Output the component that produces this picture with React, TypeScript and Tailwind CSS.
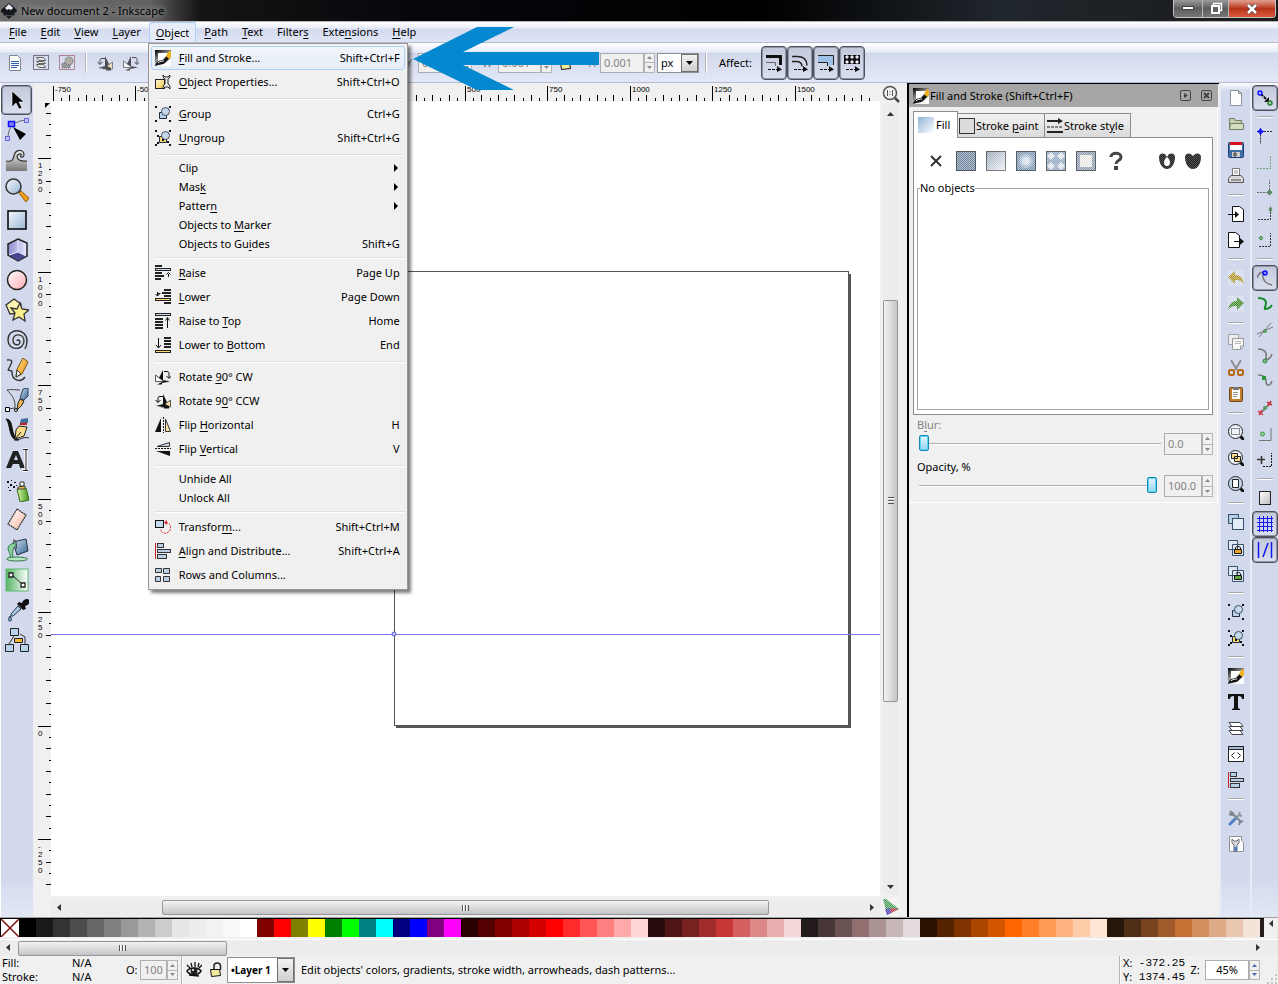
import React from "react";

type Draw = React.ReactNode;

/* ---------- shared helpers ---------- */

function Svg({ size = 16, children, className = "" }: { size?: number; children: Draw; className?: string }) {
  return (
    <svg width={size} height={size} viewBox={`0 0 ${size} ${size}`} fill="none" aria-hidden="true" className={`shrink-0 ${className}`}>
      {children}
    </svg>
  );
}

function Mnemonic({ text }: { text: string }) {
  const at = text.indexOf("_");
  if (at < 0) return <>{text}</>;
  return (
    <>
      {text.slice(0, at)}
      <span className="underline underline-offset-2">{text[at + 1]}</span>
      {text.slice(at + 2)}
    </>
  );
}

function Gradients() {
  const g = (id: string, a: string, b: string, x2 = 1, y2 = 1) => (
    <linearGradient id={id} x1="0" y1="0" x2={x2} y2={y2}>
      <stop offset="0" stopColor={a} />
      <stop offset="1" stopColor={b} />
    </linearGradient>
  );
  return (
    <svg width="0" height="0" className="absolute" aria-hidden="true">
      <defs>
        {g("blue", "#f4f9fd", "#9bb6d4")}
        {g("pink", "#ffffff", "#ffa9b3")}
        {g("wave", "#f2f2f2", "#777777", 0, 1)}
        {g("green", "#55b364", "#ffffff", 1, 0)}
        {g("yellow", "#fffbe0", "#f0c23c")}
        {g("orange", "#ffe08a", "#e8890c")}
        {g("eraser", "#ffffff", "#f5b79f")}
        {g("can", "#d8f5b0", "#3d9a12", 1, 0)}
        {g("bucket", "#cfe3f2", "#34658f")}
        {g("cube", "#8d8ccf", "#e8e8ff", 1, 0)}
        {g("fade", "#000000", "#ffffff", 0.6, 0.9)}
        {g("grey", "#ffffff", "#bdbdbd")}
        {g("tab", "#8fb2d6", "#ffffff")}
        {g("linear", "#8b9db0", "#f4f6f8")}
        <pattern id="mesh" width="2" height="2" patternUnits="userSpaceOnUse">
          <rect width="1" height="1" fill="#fff" fillOpacity=".45" />
          <rect x="1" y="1" width="1" height="1" fill="#fff" fillOpacity=".45" />
        </pattern>
      </defs>
    </svg>
  );
}

/* ---------- 16px drawings ---------- */

const objectPair = (fill: string) => (
  <>
    <path d="M4.5 6.500h7v6h-7z" fill={fill} stroke="#1d2b3a" />
    <circle cx="10.500" cy="5.500" r="4" fill="#c6d9ec" stroke="#3c4d60" />
    <path d="M0 0h2v2H0zM14 0h2v2h-2zM0 14h2v2H0zM14 14h2v2h-2z" fill="#111" />
  </>
);

const pic: Record<string, Draw> = {
  fill: (
    <>
      <path d="M0 0h16v16H0z" fill="url(#fade)" />
      <path d="M3 3h11L3 14z" fill="#fff" />
      <path d="M0 16c1-4 4-6 8-6l4-4 3 2-5 5c-2 2-6 1-10 3z" fill="#111" />
      <path d="M11 6l3-5 2 1v5l-2 2z" fill="#f3b21b" />
      <path d="M3 13c2-2 4-2 6-2" stroke="#fff" />
    </>
  ),
  props: (
    <>
      <rect x=".5" y="5.500" width="9" height="9" fill="url(#yellow)" stroke="#222" />
      <path d="M8 1c0 3 1 4 2 4v5c-2 1-2 3-2 5l2-2h3l2 2c0-3 0-4-2-5V5c2-1 2-3 2-4l-2 2h-3z" fill="#e8e8e8" stroke="#222" />
    </>
  ),
  group: objectPair("#b9d0e8"),
  ungroup: (
    <>
      {objectPair("#f8d568")}
      <path d="M7 9h2v2H7zM2 5h2v2H2zM12 11h2v2h-2zM2 12h2v2H2z" fill="#111" />
    </>
  ),
  raise: (
    <>
      <path d="M0 1h7M0 8h7M0 11h9M0 14h6" stroke="#222" strokeWidth="2" />
      <rect x=".5" y="3.500" width="15" height="2" fill="#c6d9ec" stroke="#222" />
      <path d="M13.500 12V9M11.500 9.500l2-2 2 2" stroke="#111" />
    </>
  ),
  lower: (
    <>
      <path d="M9 1h7M7 4h9M9 7h7M9 14h7" stroke="#222" strokeWidth="2" />
      <rect x=".5" y="9.500" width="15" height="2" fill="#ffdb6b" stroke="#222" />
      <path d="M2.500 3v4M.5 5l2 2 2-2M2.500 4.500h3" stroke="#111" />
    </>
  ),
  top: (
    <>
      <rect x=".5" y=".5" width="15" height="2" fill="#c6d9ec" stroke="#222" />
      <path d="M0 6h8M0 9h8M0 12h8M0 15h8" stroke="#222" strokeWidth="2" />
      <path d="M12.500 15V5M10.500 7.500l2-3 2 3" stroke="#111" />
    </>
  ),
  bottom: (
    <>
      <rect x=".5" y="13.500" width="15" height="2" fill="#ffdb6b" stroke="#222" />
      <path d="M9 1h7M9 4h7M9 7h7M9 10h7" stroke="#222" strokeWidth="2" />
      <path d="M3.500 1v10M1 8l2.500 3L6 8" stroke="#111" />
    </>
  ),
  cw: (
    <>
      <path d="M.5 6v6.500H9z" fill="#fff" stroke="#555" />
      <path d="M2 15.500h5v-1.500l8-1.500L8 11V1l-4 8 5 3" fill="#111" />
      <path d="M9 2.500h3c1.500 0 2 1 2 2V9M11.500 7L14 9.500 16.500 7" stroke="#111" />
    </>
  ),
  ccw: (
    <>
      <path d="M15.500 7v7H6z" fill="#f5dda0" stroke="#555" />
      <path d="M1 13l8 1v1.500h5V13l-4-2 2-2-4-8v10z" fill="#111" />
      <path d="M8 3.500H5C3.500 3.500 3 4 3 5.500v4M.5 7L3 9.500 5.500 7" stroke="#111" />
    </>
  ),
  fliph: (
    <>
      <path d="M6 1v14H0z" fill="#111" />
      <path d="M10.500 2v12.500h5z" fill="#f9e0a3" stroke="#333" />
      <path d="M8.500 0v16" stroke="#111" strokeDasharray="2 1" />
    </>
  ),
  flipv: (
    <>
      <path d="M14.500 1.500v4H2z" fill="#c6d9ec" stroke="#333" />
      <path d="M15 15v-5H1z" fill="#111" />
      <path d="M0 7.500h16" stroke="#111" strokeDasharray="2 1" />
    </>
  ),
  transform: (
    <>
      <rect x=".5" y="1.500" width="8" height="7" fill="#c6d9ec" stroke="#111" />
      <path d="M11 3.500c5 1 6 6 3 9s-8 2-8-2" stroke="#e0222b" strokeDasharray="2 1" />
      <path d="M12 1v5L9 3.500z" fill="#e0222b" />
    </>
  ),
  align: (
    <>
      <path d="M.5 0v16" stroke="#c81e28" />
      <rect x="2.500" y=".5" width="6" height="4" fill="#b9cfe6" stroke="#333" />
      <rect x="2.500" y="6.500" width="13" height="3" fill="#b9cfe6" stroke="#333" />
      <rect x="2.500" y="11.500" width="9" height="4" fill="#b9cfe6" stroke="#333" />
    </>
  ),
  rows: (
    <>
      <path d="M.5 1.500h6v4h-6zM8.500 1.500h6v5h-6zM.5 9.500h5v5h-5zM8.500 9.500h6v5h-6z" fill="#b9cfe6" stroke="#333" />
    </>
  ),
  doc: (
    <>
      <path d="M2.500.5h8l3 3v12h-11z" fill="#fff" stroke="#7d8594" />
      <path d="M4 6.500h8M4 8.500h8M4 10.500h8M4 12.500h6" stroke="#2f5ea8" />
    </>
  ),
  selectlayers: (
    <>
      <rect x=".5" y=".5" width="15" height="14" stroke="#111" strokeDasharray="1 1" />
      <path d="M3.500 2.500h7l2 3H6zM3.500 6.500h7l2 2H6zM3.500 9.500h7l2 3H6z" fill="#e6e6e6" stroke="#666" />
    </>
  ),
  deselect: (
    <>
      <rect x=".5" y=".5" width="15" height="14" stroke="#8d2b35" strokeDasharray="1 1" />
      <path d="M3 8h8v5H3z" fill="#999" stroke="#666" strokeDasharray="1 1" />
      <circle cx="10" cy="6" r="4" fill="#b0aca4" stroke="#555" strokeDasharray="1 1" />
    </>
  ),
  newdoc: <path d="M2.500.5h8l3 3v12h-11zM10.500.5v3h3" fill="#fdfdfb" stroke="#8e9093" />,
  open: (
    <>
      <path d="M1.500 13.500v-11h5l1 2h6v3" fill="#c5cfa9" stroke="#74806a" />
      <path d="M1.500 13.500l1-6h13v6z" fill="#d5dcbf" stroke="#74806a" />
    </>
  ),
  save: (
    <>
      <rect x=".5" y=".5" width="15" height="15" rx="1" fill="#3f6ea8" stroke="#1f3f6c" />
      <path d="M2 1h12v7H2z" fill="#fff" />
      <path d="M2 0h12v3H2z" fill="#d4121c" />
      <path d="M4 10h8v5H4z" fill="#cfcfcf" />
      <path d="M6 11h2v3H6z" stroke="#333" />
    </>
  ),
  print: (
    <>
      <path d="M4.500 7V.5h7V7" fill="#fff" stroke="#777" />
      <path d="M6 3h4M6 5h4" stroke="#999" />
      <path d="M3 7.500h10l2.500 3v4H.5v-4z" fill="#d8d8d8" stroke="#555" />
      <path d="M3 12h10" stroke="#555" />
    </>
  ),
  importdoc: (
    <>
      <path d="M4.500.5h7l4 3v12h-11z" fill="#fff" stroke="#111" />
      <path d="M0 8.500h8" stroke="#111" />
      <path d="M7 5l4 3.500L7 12z" fill="#111" />
    </>
  ),
  exportdoc: (
    <>
      <path d="M.5.5h7l4 3v12H.5z" fill="#fff" stroke="#111" />
      <path d="M6 9.500h8" stroke="#111" />
      <path d="M12 6l4 3.500-4 3.500z" fill="#111" />
    </>
  ),
  undo: (
    <>
      <path d="M0 7l7-6v4c6 0 8 4 9 9-3-4-5-4-9-4v4z" fill="#ad9224" />
      <path d="M0 0h16v16H0z" fill="url(#mesh)" />
    </>
  ),
  redo: (
    <>
      <path d="M16 7L9 1v4C3 5 1 9 0 14c3-4 5-4 9-4v4z" fill="#3c8a28" />
      <path d="M0 0h16v16H0z" fill="url(#mesh)" />
    </>
  ),
  copy: (
    <>
      <path d="M.5.5h10v10H.5z" fill="#eceef2" stroke="#a0a2a8" />
      <path d="M4.500 4.500h11v8l-3 3h-8zM12.500 15v-3h3" fill="#f7f7f7" stroke="#9a9a9a" />
      <path d="M7 7.500h6M7 9.500h6" stroke="#bbb" />
    </>
  ),
  cut: (
    <>
      <path d="M3 0l6 10M13 0L7 10" stroke="#8d8f92" strokeWidth="2" />
      <rect x="1" y="10" width="5" height="5" rx="1.500" stroke="#b4690f" strokeWidth="2" />
      <rect x="10" y="10" width="5" height="5" rx="1.500" stroke="#b4690f" strokeWidth="2" />
    </>
  ),
  paste: (
    <>
      <rect x="1.500" y="1.500" width="13" height="14" rx="1" fill="#c07f2e" stroke="#6d4412" />
      <path d="M4 3h8v10H4z" fill="#fff" />
      <path d="M5 1h6v3H5z" fill="#777" />
      <path d="M5 6.500h5M5 8.500h5M5 10.500h4" stroke="#999" />
    </>
  ),
  clone: (
    <>
      <rect x=".5" y=".5" width="10" height="9" fill="#b9cfe6" stroke="#38516c" />
      <rect x="4.500" y="4.500" width="11" height="11" fill="#e3edf7" stroke="#38516c" />
    </>
  ),
  clonelock: (
    <>
      <path d="M.5.500h9v9h-9zM4.500 4.500h11v11h-11z" fill="#dfe9f3" stroke="#38516c" />
      <path d="M7.500 9.500V8C7.500 6 12.500 6 12.500 8v1.500" stroke="#111" />
      <path d="M6.500 9.500h7v4h-7z" fill="#f0a31c" stroke="#111" />
    </>
  ),
  cloneopen: (
    <>
      <path d="M.5.5h9v9h-9zM4.500 4.500h11v11h-11z" fill="#dfe9f3" stroke="#38516c" />
      <path d="M8 8c0-2 4.500-2 4.500 0v1.500" stroke="#111" />
      <path d="M6.500 9.500h7v4h-7z" fill="#5da53c" stroke="#111" />
    </>
  ),
  text: <path d="M0 0h16v5h-2c0-2-1-3-4-3v11c0 1 1 2 2 2v1H4v-1c1 0 2-1 2-2V2C3 2 2 3 2 5H0z" fill="#111" />,
  layers: <path d="M1 10.500h11l3 4H4zM1 6.500h11l3 4H4zM1 2.500h11l3 4H4z" fill="#fff" stroke="#444" />,
  xml: (
    <>
      <rect x=".5" y=".5" width="15" height="15" fill="#fff" stroke="#222" />
      <path d="M1 2h14" stroke="#9fb9d6" strokeWidth="2" />
      <path d="M1 3.500h14" stroke="#222" />
      <path d="M6.500 6.500l-3 3 3 3M9.500 6.500l3 3-3 3" stroke="#222" />
    </>
  ),
  prefs: (
    <>
      <path d="M2 1l11 11M1 4l3 1 1-3M11 15l1-3 3-1" stroke="#7f848c" strokeWidth="2" />
      <path d="M12 2l-1 3 3 1M11 5L7 9" stroke="#8f959e" strokeWidth="2" />
      <path d="M7 9l-5 5" stroke="#4f7fc0" strokeWidth="3" strokeLinecap="round" />
    </>
  ),
  docprops: (
    <>
      <path d="M1.500.5h12v4l2 2v9h-14z" fill="#fff" stroke="#8e9093" />
      <path d="M4 3v4l2 2v6h3V9l2-2V3L9 5H6z" fill="#d5d9de" stroke="#667" />
      <path d="M6 11h3v4H6z" fill="#4f7fc0" />
    </>
  ),
  zoomsel: (
    <>
      <path d="M12 12l4 4" stroke="#111" strokeWidth="3" />
      <circle cx="7.500" cy="7.500" r="7" fill="#edf3f9" stroke="#222" />
      <rect x="3.500" y="4.500" width="8" height="6" stroke="#222" strokeDasharray="1 1" />
    </>
  ),
  zoomdraw: (
    <>
      <path d="M12 12l4 4" stroke="#111" strokeWidth="3" />
      <circle cx="7.500" cy="7.500" r="7" fill="#edf3f9" stroke="#222" />
      <path d="M3.500 3.500h6v5h-6zM6.500 6.500h6v5h-6z" fill="#ffdb8b" stroke="#222" />
    </>
  ),
  zoompage: (
    <>
      <path d="M12 12l4 4" stroke="#111" strokeWidth="3" />
      <circle cx="7.500" cy="7.500" r="7" fill="#c5d6e8" stroke="#222" />
      <path d="M4.500 3.500h6v8h-6z" fill="#fff" stroke="#222" />
    </>
  ),
  snap: (
    <>
      <path d="M4 4l7 7" stroke="#111" strokeWidth="2" strokeDasharray="3 1" />
      <path d="M12 7v5H7z" fill="#111" />
      <circle cx="3" cy="3" r="2" fill="#b5b5ff" stroke="#1111ff" strokeWidth="1.500" />
      <circle cx="13" cy="13" r="2" fill="#9ccf9f" stroke="#2d8038" strokeWidth="1.500" />
    </>
  ),
  snapbox: (
    <>
      <path d="M3.500 3.500V16M4 3.500h12" stroke="#333" strokeDasharray="2 1" />
      <circle cx="3.500" cy="3.500" r="2" fill="#5a5aff" stroke="#1111ff" />
      <path d="M0 3.500h7M3.500 0v7" stroke="#1111ff" />
    </>
  ),
  snapedge: <path d="M0 14.500h13.500V1" stroke="#7aa37c" strokeDasharray="2 1" />,
  snapcorner: (
    <>
      <path d="M0 12.500h12.500V0" stroke="#666" strokeDasharray="2 1" />
      <path d="M12.500 9l3 3.500-3 3-3-3z" fill="#5c8b60" />
    </>
  ),
  snapmid: (
    <>
      <path d="M1 13.500h12.500V3" stroke="#333" strokeDasharray="2 1" />
      <path d="M13.500 0l2 3.500-2 3-2-3z" fill="#5c8b60" />
    </>
  ),
  snapcenter: (
    <>
      <path d="M2 14.500h11.500V1" stroke="#333" strokeDasharray="2 1" />
      <circle cx="4" cy="6" r="1.500" fill="#9ccf9f" stroke="#2d8038" />
    </>
  ),
  snapnode: (
    <>
      <path d="M0 8C2 2 5 2 8 2M6 4c-1 6 3 10 9 11" stroke="#777" strokeWidth="1.500" />
      <circle cx="8" cy="3" r="2" fill="#8a8aff" stroke="#1111ff" strokeWidth="1.500" />
    </>
  ),
  snappath: <path d="M1 2c4 0 8 1 8 5 0 3-2 5-1 6 2 0 5-1 7-4" stroke="#128a26" strokeWidth="2" />,
  snapcross: (
    <>
      <path d="M0 12L16 5M2 15L14 1" stroke="#777" />
      <circle cx="8" cy="9" r="2" fill="#5c9b60" />
    </>
  ),
  snapcusp: (
    <>
      <path d="M1 1c6 0 9 3 8 8-1 4 4 3 6-3" stroke="#777" strokeWidth="1.500" />
      <circle cx="8" cy="13" r="2" fill="#7fc183" stroke="#2d8038" />
    </>
  ),
  snapsmooth: (
    <>
      <path d="M1 1c4 0 8 1 8 6 0 5 4 6 6 0" stroke="#777" strokeWidth="1.500" />
      <path d="M5 2h4v4H5z" fill="#2d9a3a" />
    </>
  ),
  snapline: (
    <>
      <path d="M3 14L14 2" stroke="#8b8b8b" strokeWidth="2" />
      <path d="M1 11l5 4M2 15l3-5M10 2l5 3M11 6l3-5" stroke="#cf3340" strokeWidth="1.500" />
      <circle cx="8" cy="8" r="2" fill="#4c9e55" />
    </>
  ),
  snapobj: (
    <>
      <path d="M2 14.500h12V2" stroke="#777" />
      <circle cx="5.500" cy="8" r="2" fill="#9ccf9f" stroke="#2d9a3a" />
    </>
  ),
  snaprot: (
    <>
      <path d="M6 14.500h8.500V1" stroke="#111" strokeDasharray="2 1" />
      <path d="M0 7.500h8M4.500 4v8" stroke="#333" strokeWidth="1.500" />
    </>
  ),
  snappage: <rect x="2.500" y="1.500" width="11" height="13" fill="url(#grey)" stroke="#222" />,
  grid: <path d="M2.500 0v16M6.500 0v16M10.500 0v16M14.500 0v16M0 2.500h16M0 6.500h16M0 10.500h16M0 14.500h16" stroke="#1616f0" />,
  guides: <path d="M1.500 0v16M14.500 0v16M11 1L6 15" stroke="#1616f0" strokeWidth="1.500" />,
  aff1: (
    <>
      <path d="M0 2.500h14.500V11" stroke="#111" strokeWidth="3" />
      <path d="M0 8.500h9.500V12" stroke="#666" />
      <path d="M2 15.500h9" stroke="#111" strokeDasharray="3 1" />
      <path d="M11 12l5 3.500-5 2.500z" fill="#111" />
    </>
  ),
  aff2: (
    <>
      <path d="M0 2.500h5c6 0 10 3 10 9M0 7.500h4c4 0 6 1 6 5" stroke="#222" strokeWidth="1.500" />
      <path d="M2 15.500h9" stroke="#111" strokeDasharray="3 1" />
      <path d="M11 12l5 3.500-5 2.500z" fill="#111" />
    </>
  ),
  aff3: (
    <>
      <path d="M0 2h15v9h-5V8H0z" fill="#9fc0e6" />
      <path d="M0 1.500h15.500V11M0 8.500h9.500V12" stroke="#222" />
      <path d="M2 15.500h9" stroke="#111" strokeDasharray="3 1" />
      <path d="M11 12l5 3.500-5 2.500z" fill="#111" />
    </>
  ),
  aff4: (
    <>
      <path d="M0 1h16v9H0z" fill="#111" />
      <path d="M3 1l2 2-2 2-2-2zM8 1l2 2-2 2-2-2zM13 1l2 2-2 2-2-2zM3 6l2 2-2 2-2-2zM8 6l2 2-2 2-2-2zM13 6l2 2-2 2-2-2z" fill="#e9ecf6" />
      <path d="M2 15.500h9" stroke="#111" strokeDasharray="3 1" />
      <path d="M11 12l5 3.500-5 2.500z" fill="#111" />
    </>
  ),
  lock: (
    <>
      <path d="M6 7V4c0-4 6.500-4 6.500 0v4" stroke="#222" strokeWidth="1.500" />
      <path d="M2.500 7.500h9l1 6-9 1z" fill="#f3ea9c" stroke="#111" />
    </>
  ),
  eye: (
    <>
      <path d="M1 9c3-4 11-4 14 0-3 5-11 5-14 0z" fill="#fff" stroke="#111" strokeWidth="1.500" />
      <circle cx="8" cy="9" r="3.500" fill="#222" />
      <circle cx="7" cy="8" r="1" fill="#fff" />
      <path d="M1 3l3 3M5 1l1 4M9 0v5M13 1l-1 4M16 3l-3 3M3 13l10 1" stroke="#111" strokeWidth="1.300" />
    </>
  ),
};

/* ---------- 24px tool drawings ---------- */

const tools: { name: string; art: Draw }[] = [
  { name: "Select", art: <path d="M7 3v16l4-4 3 6 3-1-3-6h5z" fill="#000" stroke="#fff" strokeWidth=".6" /> },
  {
    name: "Edit nodes",
    art: (
      <>
        <path d="M3 20C3 8 10 3 21 2" stroke="#667" />
        <path d="M.5 18.500h4v4h-4zM19.500.5h4v4h-4z" fill="#c4c4f7" stroke="#5f5fe8" />
        <path d="M3.500 3.500h6v5h-6z" fill="#7d7dff" stroke="#1111ff" strokeWidth="1.500" />
        <path d="M8 9l13 7-6 6z" fill="#000" />
      </>
    ),
  },
  {
    name: "Tweak",
    art: (
      <>
        <path d="M1 23V13c6 1 7-1 8-5 1-5 6-8 9-5 2 3 0 6-2 4-5-1-6 8 6 6v10z" fill="url(#wave)" />
        <path d="M1 13c6 1 7-1 8-5 1-6 7-7 9-4 2 2 1 6-2 5-1-1 0-3 1-2M16 6c-6-1-6 8 6 7" stroke="#333" strokeWidth="1.200" />
      </>
    ),
  },
  {
    name: "Zoom",
    art: (
      <>
        <path d="M14 15l2-2 8 7-3 4z" fill="#f0a020" stroke="#8b5a08" />
        <circle cx="8.500" cy="8.500" r="7.500" fill="url(#blue)" stroke="#333" strokeWidth="1.500" />
      </>
    ),
  },
  { name: "Rectangle", art: <rect x="3" y="3" width="18" height="18" fill="url(#blue)" stroke="#000" strokeWidth="1.500" /> },
  {
    name: "3D box",
    art: (
      <>
        <path d="M13 1l9 4v13l-9 5-10-6V6z" fill="url(#cube)" stroke="#222" strokeWidth="1.500" />
        <path d="M13 14l8 4-8 5-9-6z" fill="#47478f" />
        <path d="M13 2v12l-9 3M13 14l8 4" stroke="#e9e9ff" />
      </>
    ),
  },
  { name: "Ellipse", art: <circle cx="12" cy="12" r="9.500" fill="url(#pink)" stroke="#222" strokeWidth="1.500" /> },
  {
    name: "Star",
    art: (
      <>
        <path d="M9 1l7 5-2 9-9 1-4-9z" fill="#fcf3b0" stroke="#333" strokeWidth="1.300" />
        <path d="M15 5l2 6 7 1-5 4 1 7-6-4-6 3 2-7-4-5 6 1z" fill="#fdee8c" stroke="#333" strokeWidth="1.300" />
      </>
    ),
  },
  {
    name: "Spiral",
    art: <path d="M12 13c0-2 3-1 3 1 0 4-7 4-7-2 0-7 11-7 11 1 0 10-16 10-16-1C3-1 22 0 22 13c0 4-1 6-2 8" stroke="#333" strokeWidth="1.400" />,
  },
  {
    name: "Pencil",
    art: (
      <>
        <path d="M2 2c8-1 4 4 2 8-3 5 4 0 3 5 0 6 8 11 13 4" stroke="#333" strokeWidth="1.400" />
        <path d="M18 0l5 4-6 12-6 3 1-8z" fill="url(#orange)" stroke="#7b5208" />
        <path d="M12 12l4 4-5 3z" fill="#fff" stroke="#333" />
      </>
    ),
  },
  {
    name: "Bezier",
    art: (
      <>
        <path d="M2 2c5-1 9 0 13 0M2 2c4 4 9 10 8 18L3 21" stroke="#444" />
        <path d="M.5 19.500h4v4h-4z" fill="#fff" stroke="#000" />
        <circle cx="11" cy="22" r="1.500" fill="#fff" stroke="#000" />
        <path d="M18 1l5-1v8l-4 4-4-2z" fill="url(#bucket)" stroke="#345" />
        <path d="M15 11l4 2-2 4-5 5 1-7z" fill="#e8b34e" stroke="#222" />
      </>
    ),
  },
  {
    name: "Calligraphy",
    art: (
      <>
        <path d="M1 1c9 0 3 17 13 21-11 1-8-16-13-21z" fill="#111" stroke="#111" />
        <path d="M9 22c5 1 9-4 15-2" stroke="#222" />
        <path d="M16 1l7-1v5h-8z" fill="#456f98" />
        <path d="M15 5h7v2h-7z" fill="#c42020" />
        <path d="M14 8l8 1-3 9-9 3 1-9z" fill="#f7dc8c" stroke="#222" />
        <path d="M11 20l5-6" stroke="#222" />
      </>
    ),
  },
  {
    name: "Text",
    art: (
      <>
        <path d="M1 20L8 3h5l7 17h-5l-1-4H8l-2 4zM9 12h4l-2-5z" fill="#222" fillRule="evenodd" />
        <path d="M18 1.500h5M18 22.500h5M21 2v20" stroke="#fff" strokeWidth="3" />
        <path d="M18 1.500h5M18 22.500h5M21 2v20" stroke="#222" />
      </>
    ),
  },
  {
    name: "Spray",
    art: (
      <>
        <path d="M12 11l9-1 3 12-9 2z" fill="url(#can)" stroke="#3a6a18" />
        <path d="M13 9l7-1v3h-7z" fill="#f0b848" stroke="#444" />
        <path d="M15 4h4v4h-4z" fill="#fff" stroke="#333" />
        <path d="M2 3h2v2H2zM6 2h1v1H6zM5 6h2v2H5zM9 4h2v1H9zM3 9h1v1H3zM8 8h2v2H8zM4 12h2v1H4zM11 7h1v1h-1z" fill="#111" />
      </>
    ),
  },
  { name: "Eraser", art: <path d="M12 1l9 6-9 15-9-6z" fill="url(#eraser)" stroke="#333" strokeDasharray="2 .6" strokeWidth="1.200" /> },
  {
    name: "Paint bucket",
    art: (
      <>
        <path d="M8 4l13-3 2 12-11 4z" fill="url(#bucket)" stroke="#234" />
        <path d="M3 11c0-5 6-7 9-4-4 1-5 6-4 13H5c1-4-1-5-2-9z" fill="#8ed2a0" stroke="#357a48" />
        <ellipse cx="12" cy="21" rx="10.500" ry="2" fill="#b7e6c2" stroke="#357a48" />
        <path d="M8 2c3-1 4 4 3 9" stroke="#333" />
      </>
    ),
  },
  {
    name: "Gradient",
    art: (
      <>
        <rect x="1" y="1" width="22" height="22" fill="url(#green)" stroke="#63b873" />
        <path d="M7 7l10 9" stroke="#222" />
        <path d="M4 5h4v4H4zM16 15h4v4h-4z" fill="#fff" stroke="#222" strokeWidth="1.300" />
      </>
    ),
  },
  {
    name: "Dropper",
    art: (
      <>
        <path d="M14 4l3 1c1-4 6-5 7-3s0 5-4 6l1 3-3 1-6-6z" fill="#111" />
        <path d="M13 8l3 3-8 7H6v-2z" fill="#a9c8e6" stroke="#26384a" />
        <path d="M5 18c2 3 2 5 0 5s-2-2 0-5z" fill="#7aa6d4" stroke="#26384a" />
      </>
    ),
  },
  {
    name: "Connector",
    art: (
      <>
        <path d="M9 8l-5 8M15 6l5 3v8" stroke="#333" />
        <path d="M5.500.5h8v7h-8zM.5 16.500h8v7h-8zM15.500 16.500h8v7h-8z" fill="#b9d2ec" stroke="#222" />
        <path d="M9.500 10.500h8v4h-8z" fill="#f7bb34" stroke="#222" />
      </>
    ),
  },
];

/* ---------- title and menus ---------- */

function TitleBar() {
  return (
    <header className="flex h-[22px] items-start justify-between border-b border-[#b5b5b8] bg-[linear-gradient(90deg,#6f6f6f_0px,#606060_150px,#141414_200px,#05070b_420px,#000_760px,#20262d_1000px,#1b1b1b_100%)]">
      <div className="flex h-[22px] items-center gap-1 pl-px">
        <Svg size={16}>
          <path d="M8 0l7 6c2 2 0 4-2 4l1 2-3 1-3 3-3-3-3-1 1-2c-3 0-4-2-2-4z" fill="#15171c" />
          <path d="M8 1l4 4-2 2-2-1-2 1-2-2z" fill="#e8eef5" />
          <path d="M4 12c3 1 5 1 8 0" stroke="#556" />
        </Svg>
        <h1 className="text-black [text-shadow:0_0_6px_#aaa,0_0_10px_#999]">New document 2 - Inkscape</h1>
      </div>
      <div className="mr-0.5 flex h-[18px] overflow-hidden rounded-b border border-t-0 border-[#c3c3c3]">
        <button aria-label="Minimize" className="flex w-7 items-center justify-center bg-gradient-to-b from-[#9a9a9a] via-[#5d5d5d] to-[#777]">
          <svg width="12" height="5" viewBox="0 0 12 5" aria-hidden="true"><rect x=".5" y=".5" width="11" height="3" fill="#fff" stroke="#444" /></svg>
        </button>
        <button aria-label="Restore" className="flex w-[27px] items-center justify-center border-x border-[#b9b9b9] bg-gradient-to-b from-[#9a9a9a] via-[#5d5d5d] to-[#777]">
          <Svg size={14}>
            <path d="M4.500 3V1.500h8v7H11" stroke="#fff" strokeWidth="1.500" />
            <rect x="3" y="4" width="7" height="7" stroke="#fff" strokeWidth="2" />
          </Svg>
        </button>
        <button aria-label="Close" className="flex w-[46px] items-center justify-center bg-gradient-to-b from-[#e0a08f] via-[#b8321b] to-[#d85a3a]">
          <Svg size={12}><path d="M2 2l8 8M10 2l-8 8" stroke="#444" strokeWidth="4" /><path d="M2 2l8 8M10 2l-8 8" stroke="#fff" strokeWidth="2.500" /></Svg>
        </button>
      </div>
    </header>
  );
}

type Item = { label: string; keys?: string; icon?: string; sub?: boolean };

const objectMenu: Item[][] = [
  [
    { label: "_Fill and Stroke...", keys: "Shift+Ctrl+F", icon: "fill" },
    { label: "_Object Properties...", keys: "Shift+Ctrl+O", icon: "props" },
  ],
  [
    { label: "_Group", keys: "Ctrl+G", icon: "group" },
    { label: "_Ungroup", keys: "Shift+Ctrl+G", icon: "ungroup" },
  ],
  [
    { label: "Clip", sub: true },
    { label: "Mas_k", sub: true },
    { label: "Patter_n", sub: true },
    { label: "Objects to _Marker" },
    { label: "Objects to Gu_ides", keys: "Shift+G" },
  ],
  [
    { label: "_Raise", keys: "Page Up", icon: "raise" },
    { label: "_Lower", keys: "Page Down", icon: "lower" },
    { label: "Raise to _Top", keys: "Home", icon: "top" },
    { label: "Lower to _Bottom", keys: "End", icon: "bottom" },
  ],
  [
    { label: "Rotate _90° CW", icon: "cw" },
    { label: "Rotate 9_0° CCW", icon: "ccw" },
    { label: "Flip _Horizontal", keys: "H", icon: "fliph" },
    { label: "Flip _Vertical", keys: "V", icon: "flipv" },
  ],
  [{ label: "Unhide All" }, { label: "Unlock All" }],
  [
    { label: "Transfor_m...", keys: "Shift+Ctrl+M", icon: "transform" },
    { label: "_Align and Distribute...", keys: "Shift+Ctrl+A", icon: "align" },
    { label: "Rows and Columns...", icon: "rows" },
  ],
];

function ObjectMenu() {
  return (
    <div role="menu" aria-label="Object" className="absolute top-[21px] -left-px z-20 w-[260px] border border-[#979797] bg-[#f0f0f0] p-0.5 shadow-[3px_3px_3px_rgba(0,0,0,0.5)]">
      {objectMenu.map((section, s) => (
        <div key={s}>
          {s > 0 && (
            <div className="h-2 pt-1 pl-1">
              <div className="h-0.5 border-b border-white bg-[#e0e0e0]" />
            </div>
          )}
          {section.map((item, i) => (
            <button
              key={item.label}
              role="menuitem"
              className={`flex w-full items-center rounded-[3px] border pr-1 text-left ${item.icon ? "h-6" : "h-[19px]"} ${
                s === 0 && i === 0 ? "border-[#aecff7] bg-gradient-to-b from-[#f2f5fa] to-[#e6edf7]" : "border-transparent"
              }`}
            >
              <span className="flex w-[27px] pl-[3px]">{item.icon && <Svg>{pic[item.icon]}</Svg>}</span>
              <span className="grow"><Mnemonic text={item.label} /></span>
              {item.keys && <span>{item.keys}</span>}
              {item.sub && (
                <svg width="4" height="8" viewBox="0 0 4 8" className="mr-0.5" aria-hidden="true"><path d="M0 0l4 4-4 4z" fill="#000" /></svg>
              )}
            </button>
          ))}
        </div>
      ))}
    </div>
  );
}

function MenuBar() {
  const before = ["_File", "_Edit", "_View", "_Layer"];
  const after = ["_Path", "_Text", "Filter_s", "Exte_nsions", "_Help"];
  const plain = (t: string) => (
    <button key={t} className="px-[7px]"><Mnemonic text={t} /></button>
  );
  return (
    <nav className="flex h-[21px] border-b border-[#b6bccf] bg-[linear-gradient(#fff_0px,#e9edf8_6px,#d4dbef_7px,#dfe5f5_20px)] pl-0.5">
      {before.map(plain)}
      <div className="relative mx-px flex">
        <button aria-haspopup="menu" aria-expanded="true" className="rounded-t-[3px] border border-b-0 border-[#aecff7] bg-[#e6ecf8] px-1.5">
          <Mnemonic text="_Object" />
        </button>
        <ObjectMenu />
      </div>
      {after.map(plain)}
    </nav>
  );
}

/* ---------- form pieces ---------- */

function Steppers({ active = false }: { active?: boolean }) {
  const arrow = active ? "#4a62b8" : "#8a8a8a";
  return (
    <span className="flex w-[11px] flex-col bg-[#f0f0f0]">
      <button aria-label="Increase" className="flex grow items-center justify-center border border-[#b5b5b5]">
        <svg width="5" height="3" viewBox="0 0 5 3" aria-hidden="true"><path d="M0 3l2.500-3L5 3z" fill={arrow} /></svg>
      </button>
      <button aria-label="Decrease" className="flex grow items-center justify-center border border-t-0 border-[#b5b5b5]">
        <svg width="5" height="3" viewBox="0 0 5 3" aria-hidden="true"><path d="M0 0l2.500 3L5 0z" fill={arrow} /></svg>
      </button>
    </span>
  );
}

function Spin({ label, value, width, height = "h-5", active = false }: { label: string; value: string; width: string; height?: string; active?: boolean }) {
  return (
    <span className={`flex shrink-0 ${height}`}>
      <input
        aria-label={label}
        disabled={!active}
        defaultValue={value}
        className={`${width} border border-[#abadb3] px-[3px] ${active ? "bg-white text-center text-black" : "bg-[#f0f0f0] text-[#838383]"}`}
      />
      <Steppers active={active} />
    </span>
  );
}

function Combo({ label, value, className, arrowWidth }: { label: string; value: string; className: string; arrowWidth: string }) {
  return (
    <span className={`relative flex shrink-0 border border-[#8e8f8f] bg-white ${className}`}>
      <select aria-label={label} className="w-full appearance-none bg-transparent pl-[3px]">
        <option>{value}</option>
      </select>
      <span className={`pointer-events-none absolute inset-y-0 right-0 flex items-center justify-center border border-[#707070] bg-gradient-to-b from-[#f2f2f2] to-[#cfcfcf] ${arrowWidth}`}>
        <svg width="7" height="4" viewBox="0 0 7 4" aria-hidden="true"><path d="M0 0h7L3.500 4z" fill="#000" /></svg>
      </span>
    </span>
  );
}

function ToolButton({ name, children }: { name: string; children: Draw }) {
  return <button aria-label={name} className="flex w-[26px] items-center justify-center">{children}</button>;
}

const pressedLook = "rounded border border-[#4d515c] shadow-[inset_0_0_0_1px_#8f95a6] bg-gradient-to-b from-[#c3c9dc] to-[#dadfef]";

function ControlBar() {
  return (
    <div className="flex h-10 items-center border-b border-[#b7b7cf] bg-[linear-gradient(#fff_0px,#e8ecf7_9px,#d3d9ec_10px,#e2e8f7_39px)] pl-0.5">
      <ToolButton name="Select all"><Svg>{pic.doc}</Svg></ToolButton>
      <ToolButton name="Select in all layers"><Svg>{pic.selectlayers}</Svg></ToolButton>
      <ToolButton name="Deselect"><Svg>{pic.deselect}</Svg></ToolButton>
      <div className="mx-[5px] h-5 w-0.5 border-r border-white bg-[#b5b5b5]" />
      <ToolButton name="Rotate counter-clockwise"><Svg className="opacity-70">{pic.ccw}</Svg></ToolButton>
      <ToolButton name="Rotate clockwise"><Svg className="opacity-70">{pic.cw}</Svg></ToolButton>
      <div className="ml-[262px] flex items-center text-[#838383]">
        <span className="w-3">Y</span>
        <Spin label="Y" value="0.001" width="w-[43px]" />
        <span className="ml-2.5 w-4">W</span>
        <Spin label="Width" value="0.001" width="w-[43px]" />
      </div>
      <button aria-label="Lock width and height" className="ml-1.5 w-5"><Svg>{pic.lock}</Svg></button>
      <div className="ml-2.5 flex items-center text-[#838383]">
        <span className="w-3">H</span>
        <Spin label="Height" value="0.001" width="w-[44px]" />
      </div>
      <Combo label="Unit" value="px" className="ml-0.5 h-5 w-[42px]" arrowWidth="w-[17px]" />
      <div className="ml-1.5 h-5 w-0.5 border-r border-white bg-[#b5b5b5]" />
      <span className="ml-3 w-[42px]">Affect:</span>
      {["aff1", "aff2", "aff3", "aff4"].map((name, i) => (
        <button key={name} aria-pressed="true" aria-label={`Affect option ${i + 1}`} className={`flex h-[34px] w-[26px] items-center justify-center ${pressedLook}`}>
          <svg width="16" height="18" viewBox="0 0 16 18" fill="none" aria-hidden="true">{pic[name]}</svg>
        </button>
      ))}
    </div>
  );
}

/* ---------- left tools, rulers and canvas ---------- */

function Toolbox() {
  return (
    <div role="toolbar" aria-label="Tools" className="flex w-[33px] shrink-0 flex-col items-center border-l border-white bg-[linear-gradient(#e6ebf7_0px,#d3d9ec_8px,#d3d9ec_95%,#e2e7f6_100%)] pt-0.5 pr-px">
      {tools.map((t, i) => (
        <button key={t.name} aria-label={t.name} className={`flex h-[30px] w-[31px] items-center justify-center ${i === 0 ? pressedLook : ""}`}>
          <Svg size={24}>{t.art}</Svg>
        </button>
      ))}
    </div>
  );
}

function TopRuler() {
  const step = 8.24;
  const ticks = Array.from({ length: 100 }, (_, i) => i);
  const labels = [-750, -500, 500, 750, 1000, 1250, 1500];
  return (
    <svg className="h-[18px] w-full" aria-hidden="true">
      {ticks.map((i) => {
        const x = Math.round(2 + i * step) + 0.5;
        const len = i % 10 === 0 ? 15 : i % 2 === 0 ? 6 : 3;
        return <path key={i} d={`M${x} ${18 - len}v${len}`} stroke="#000" />;
      })}
      {labels.map((v) => (
        <text key={v} x={Math.round(2 + ((v + 750) / 25) * step) + 2} y="9" className="font-['Liberation_Sans',sans-serif] text-[8px]" fill="#000">
          {v}
        </text>
      ))}
    </svg>
  );
}

function SideRuler() {
  const step = 11.35;
  const ticks = Array.from({ length: 70 }, (_, i) => i - 4);
  return (
    <svg className="h-full w-[18px] shrink-0" aria-hidden="true">
      <path d="M12 20h5l-5 5z" fill="#000" />
      {ticks.map((i) => {
        const y = Math.round(75 + i * step) + 0.5;
        const len = i % 10 === 0 ? 13 : i % 2 === 0 ? 5 : 2;
        return y > 24 && y < 802 ? <path key={i} d={`M${18 - len} ${y}h${len}`} stroke="#000" /> : null;
      })}
      {ticks.filter((i) => i % 10 === 0).map((i) =>
        String(1250 - i * 25).split("").map((c, k) => (
          <text key={`${i}-${k}`} x="5" y={Math.round(75 + i * step) + 10 + k * 8} className="font-['Liberation_Sans',sans-serif] text-[8px]" fill="#000">
            {c}
          </text>
        )),
      )}
    </svg>
  );
}

function Canvas() {
  return (
    <svg className="w-full min-w-0 grow basis-0 bg-white" aria-label="Drawing">
      <path d="M345 625.500h453.500V173" stroke="#555" strokeWidth="3" fill="none" />
      <rect x="343.500" y="170.500" width="454" height="454" fill="#fff" stroke="#555" />
      <path d="M0 533.500h4000" stroke="#7878f5" />
      <circle cx="343" cy="533" r="2" fill="#c9c9ff" stroke="#5555dd" />
    </svg>
  );
}

function Grip({ vertical = false }: { vertical?: boolean }) {
  return (
    <svg width="8" height="8" viewBox="0 0 8 8" className={vertical ? "rotate-90" : ""} aria-hidden="true">
      <path d="M.5 1v6M3.500 1v6M6.500 1v6" stroke="#555" />
      <path d="M1.500 1v6M4.500 1v6" stroke="#fff" />
    </svg>
  );
}

function Arrow({ d }: { d: string }) {
  return (
    <svg width="8" height="8" viewBox="0 0 8 8" className="shrink-0" aria-hidden="true"><path d={d} fill="#333" /></svg>
  );
}

const UP = "M0 6h7L3.500 2z";
const DOWN = "M0 2h7L3.500 6z";
const LEFT = "M6 0v7L2 3.500z";
const RIGHT = "M2 0v7l4-3.500z";

function Workspace() {
  return (
    <div className="flex min-w-0 grow">
      <SideRuler />
      <div className="flex min-w-0 grow flex-col">
        <TopRuler />
        <Canvas />
        <div className="mt-[3px] flex h-[17px] items-center bg-[#ececec] py-px pr-1 pl-1">
          <Arrow d={LEFT} />
          <div className="ml-[99px] flex h-full grow items-center justify-center rounded-[2px] border border-[#979797] bg-gradient-to-b from-[#f2f2f2] via-[#dcdcde] to-[#c4c4c8]"><Grip /></div>
          <div className="w-[99px]" />
          <Arrow d={RIGHT} />
        </div>
        <div className="h-px" />
      </div>
      <div className="flex w-[27px] shrink-0 flex-col items-start bg-[#f0f0f0]">
        <button aria-label="Zoom to 1:1" className="mt-0.5 ml-0.5">
          <Svg size={18}>
            <circle cx="8" cy="8" r="6.500" fill="#f2f2f2" stroke="#555" strokeWidth="1.500" />
            <path d="M5.500 5v6M10.500 5v6M8 6.500v1M8 9v1" stroke="#555" />
            <path d="M13 13l4 4" stroke="#444" strokeWidth="2.500" />
          </Svg>
        </button>
        <div className="ml-[3px] flex w-[15px] grow flex-col items-center bg-[#ececec] pt-[7px] pb-[3px]">
          <Arrow d={UP} />
          <div className="h-[182px]" />
          <div className="flex w-full grow items-center justify-center rounded-[2px] border border-[#979797] bg-gradient-to-r from-[#f2f2f2] via-[#dcdcde] to-[#c4c4c8]"><Grip vertical /></div>
          <div className="h-[181px]" />
          <Arrow d={DOWN} />
        </div>
        <div className="mt-1 mb-px ml-0.5">
          <Svg size={18}>
            <path d="M1 1h3l13 10-12 6z" fill="#4b9c58" />
            <path d="M17 11L5 17l4-7z" fill="#b8324a" />
            <path d="M5 17l4-2-1-5-5 1z" fill="#4a3fb0" />
            <path d="M0 0h18v18H0z" fill="url(#mesh)" />
          </Svg>
        </div>
      </div>
    </div>
  );
}

/* ---------- Fill and Stroke dialog ---------- */

const slider =
  "ml-0.5 h-[17px] w-full min-w-0 appearance-none bg-transparent [&::-webkit-slider-runnable-track]:h-0.5 [&::-webkit-slider-runnable-track]:border-b [&::-webkit-slider-runnable-track]:border-white [&::-webkit-slider-runnable-track]:bg-[#adb0b0] [&::-webkit-slider-thumb]:-mt-2 [&::-webkit-slider-thumb]:h-4 [&::-webkit-slider-thumb]:w-2.5 [&::-webkit-slider-thumb]:appearance-none [&::-webkit-slider-thumb]:rounded-[2px] [&::-webkit-slider-thumb]:border [&::-webkit-slider-thumb]:border-[#1f86b4] [&::-webkit-slider-thumb]:shadow-[inset_0_0_0_1px_#4fdcf7] [&::-webkit-slider-thumb]:bg-gradient-to-b [&::-webkit-slider-thumb]:from-[#e6f6fd] [&::-webkit-slider-thumb]:to-[#98d3f2]";

function PaintKinds() {
  const swatch = (inner: Draw) => (
    <Svg size={20}>
      {inner}
      <rect width="20" height="20" fill="url(#mesh)" />
      <rect x=".5" y=".5" width="19" height="19" stroke="#111" strokeDasharray="1 1" />
    </Svg>
  );
  const kinds: [string, Draw][] = [
    ["No paint", <Svg size={20}><path d="M5 5l10 10M15 5L5 15" stroke="#333" strokeWidth="2" /></Svg>],
    ["Flat color", swatch(<rect width="20" height="20" fill="#7288a0" />)],
    ["Linear gradient", swatch(<rect width="20" height="20" fill="url(#linear)" />)],
    ["Radial gradient", swatch(<><rect width="20" height="20" fill="#7d97b3" /><circle cx="10" cy="10" r="7" fill="#a9bccf" /><circle cx="10" cy="10" r="4" fill="#d5dfe9" /></>)],
    ["Pattern", swatch(<><rect width="20" height="20" fill="#8fa5bc" /><path d="M5 1l4 4-4 4-4-4zM15 1l4 4-4 4-4-4zM5 11l4 4-4 4-4-4zM15 11l4 4-4 4-4-4z" fill="#dfe6ed" /></>)],
    ["Swatch", swatch(<><rect width="20" height="20" fill="#8d9db0" /><rect x="4" y="4" width="12" height="12" fill="#e9e9e6" /></>)],
    ["Unset paint", <Svg size={20}><path d="M5 6c0-5 10-5 10 0 0 4-5 3-5 7" stroke="#444" strokeWidth="3" /><rect x="8" y="15" width="4" height="4" fill="#444" /></Svg>],
  ];
  return (
    <div className="flex h-[37px] items-end gap-2.5 pl-[9px] pb-px">
      {kinds.map(([name, art]) => <button key={name} aria-label={name} className="flex h-[26px] items-center">{art}</button>)}
      <div className="ml-auto flex gap-2 pr-[7px]">
        <button aria-label="Even-odd fill" className="flex h-[26px] items-center">
          <Svg size={18}>
            <path d="M1 5c0-4 4-4 6-3h4c2-1 6-1 6 3 0 6-3 12-8 12S1 11 1 5zM9 5c-4 3-4 9 0 9s4-6 0-9z" fill="#222" fillRule="evenodd" />
            <path d="M7 2l2 3 2-3z" fill="#fff" />
            <path d="M0 0h18v18H0z" fill="url(#mesh)" opacity=".5" />
          </Svg>
        </button>
        <button aria-label="Nonzero fill" className="flex h-[26px] items-center">
          <Svg size={18}>
            <path d="M1 5C1 1 6 0 9 4c3-4 8-3 8 1 0 6-3 12-8 12S1 11 1 5z" fill="#222" />
            <path d="M0 0h18v18H0z" fill="url(#mesh)" opacity=".5" />
          </Svg>
        </button>
      </div>
    </div>
  );
}

function Dock() {
  return (
    <aside className="flex w-[312px] shrink-0 flex-col border-t border-l-2 border-black bg-[#f0f0f0] pr-px">
      <div className="flex h-[23px] items-center bg-[#a6a6a6] pr-1.5 pl-1">
        <Svg>{pic.fill}</Svg>
        <h2 className="grow pl-px">Fill and Stroke (Shift+Ctrl+F)</h2>
        <button aria-label="Iconify" className="mr-2.5">
          <Svg size={11}><rect x=".5" y=".5" width="10" height="10" rx="1.500" stroke="#444" /><path d="M4 3l4 2.500L4 8z" fill="#444" /></Svg>
        </button>
        <button aria-label="Close dialog">
          <Svg size={11}><rect x=".5" y=".5" width="10" height="10" rx="1.500" stroke="#444" /><path d="M3 3l5 5M8 3L3 8" stroke="#444" strokeWidth="2" /></Svg>
        </button>
      </div>
      <div className="border-r border-b border-white px-1 pt-1 pb-[5px]">
        <div role="tablist" className="flex items-end">
          <button role="tab" aria-selected="true" className="z-10 -mb-px flex h-[27px] w-[45px] items-center border border-b-0 border-[#898c95] bg-white pl-1">
            <Svg><rect width="16" height="16" fill="url(#tab)" /></Svg>
            <span className="pl-0.5">Fill</span>
          </button>
          <button role="tab" aria-selected="false" className="flex h-6 w-[87px] items-center border border-b-0 border-l-0 border-[#898c95] bg-gradient-to-b from-[#f2f2f2] to-[#dadada] pl-px">
            <Svg><rect x=".5" y=".5" width="15" height="15" fill="#dcdcdc" stroke="#333" /></Svg>
            <span className="pl-px whitespace-nowrap"><Mnemonic text="Stroke _paint" /></span>
          </button>
          <button role="tab" aria-selected="false" className="flex h-6 w-[86px] items-center border border-b-0 border-l-0 border-[#898c95] bg-gradient-to-b from-[#f2f2f2] to-[#dadada] pl-0.5">
            <Svg><path d="M0 3h13M0 14h16" stroke="#222" strokeWidth="2" /><path d="M11 0l5 3-5 3z" fill="#222" /><path d="M0 9h16" stroke="#222" strokeDasharray="3 1" /></Svg>
            <span className="pl-px whitespace-nowrap"><Mnemonic text="Stroke st_yle" /></span>
          </button>
        </div>
        <div className="border border-[#898c95] bg-white px-[3px] pb-1">
          <PaintKinds />
          <fieldset className="mt-[5px] h-[230px] border border-[#a5a5a5] px-0.5">
            <legend className="leading-4">No objects</legend>
          </fieldset>
        </div>
        <div className="pl-1">
          <label htmlFor="blur" className="block h-[18px] pt-0.5 leading-4 text-[#838383]"><Mnemonic text="B_lur:" /></label>
          <div className="flex h-[22px] items-center">
            <input id="blur" type="range" defaultValue={0} disabled className={slider} />
            <span className="w-[3px] shrink-0" />
            <Spin label="Blur value" value="0.0" width="w-[38px]" height="h-[22px]" />
          </div>
          <label htmlFor="opacity" className="block h-5 pt-1 leading-4">Opacity, %</label>
          <div className="flex h-[22px] items-center">
            <input id="opacity" type="range" defaultValue={100} className={slider} />
            <span className="w-[7px] shrink-0" />
            <Spin label="Opacity value" value="100.0" width="w-[38px]" height="h-[22px]" />
          </div>
        </div>
      </div>
    </aside>
  );
}

/* ---------- right icon strips ---------- */

function Strip({ label, names, pressed = [], className }: { label: string; names: string[]; pressed?: string[]; className: string }) {
  return (
    <div role="toolbar" aria-label={label} className={`flex shrink-0 flex-col items-center border-l-2 border-[#e8ecf7] bg-[linear-gradient(#fff_0px,#d3d9ec_8px,#d3d9ec_95%,#e2e7f6_100%)] pt-0.5 ${className}`}>
      {names.map((n, i) =>
        n === "-" ? (
          <div key={i} className="flex h-3 items-center"><div className="h-0.5 w-4 border-b border-white bg-[#a9a9a9]" /></div>
        ) : (
          <button key={i} aria-label={n} className={`flex h-[26px] w-[26px] items-center justify-center ${pressed.includes(n) ? pressedLook : ""}`}>
            <Svg>{pic[n]}</Svg>
          </button>
        ),
      )}
    </div>
  );
}

const commands = ["newdoc", "open", "save", "print", "-", "importdoc", "exportdoc", "-", "undo", "redo", "-", "copy", "cut", "paste", "-", "zoomsel", "zoomdraw", "zoompage", "-", "clone", "clonelock", "cloneopen", "-", "group", "ungroup", "-", "fill", "text", "layers", "xml", "align", "-", "prefs", "docprops"];
const snaps = ["snap", "-", "snapbox", "snapedge", "snapcorner", "snapmid", "snapcenter", "-", "snapnode", "snappath", "snapcross", "snapcusp", "snapsmooth", "snapline", "snapobj", "snaprot", "-", "snappage", "grid", "guides"];

/* ---------- palette and status ---------- */

const palette =
  "000000 1a1a1a 333333 4d4d4d 666666 808080 999999 b3b3b3 cccccc e6e6e6 ececec f2f2f2 f9f9f9 ffffff 800000 ff0000 808000 ffff00 008000 00ff00 008080 00ffff 000080 0000ff 800080 ff00ff 2b0000 550000 800000 aa0000 d40000 ff0000 ff2a2a ff5555 ff8080 ffaaaa ffd5d5 280b0b 501616 782121 a02c2c c83737 d35f5f de8787 e9afaf f4d7d7 241c1c 483737 6c5353 916f6f ac9393 c8b7b7 e3dbdb 2b1100 552200 803300 aa4400 d45500 ff6600 ff7f2a ff9955 ffb380 ffccaa ffe6d5 28170b 502d16 784421 a05a2c c87137 d38d5f deaa87 e9c6af f4e3d7 241f1c".split(" ");

function Palette() {
  return (
    <div className="border-t border-[#a0a0a0] bg-[#f0f0f0]">
      <div className="flex">
        <div className="flex h-[19px] min-w-0 grow overflow-hidden border-t border-l border-black bg-black">
          <button aria-label="None" className="w-[18px] shrink-0 bg-white">
            <svg width="18" height="18" viewBox="0 0 18 18" aria-hidden="true"><path d="M0 0l18 18M18 0L0 18" stroke="#7a1010" strokeWidth="1.500" /></svg>
          </button>
          {palette.map((c, i) => (
            <button key={i} aria-label={`#${c}`} className="w-[17px] shrink-0" style={{ backgroundColor: `#${c}` }} />
          ))}
        </div>
        <button aria-label="Palette menu" className="flex w-[14px] shrink-0 justify-center pt-0.5"><Arrow d={LEFT} /></button>
      </div>
      <div className="mt-0.5 flex h-[17px] items-center border-t border-white bg-[#ececec] pr-4 pl-1">
        <Arrow d={LEFT} />
        <div className="ml-1.5 flex h-[15px] w-[209px] items-center justify-center rounded-[2px] border border-[#979797] bg-gradient-to-b from-[#f2f2f2] via-[#dcdcde] to-[#c4c4c8]"><Grip /></div>
        <div className="grow" />
        <Arrow d={RIGHT} />
      </div>
    </div>
  );
}

function StatusBar() {
  return (
    <footer className="flex h-7 items-center bg-[#f0f0f0]">
      <dl className="grid w-[126px] shrink-0 grid-cols-[70px_1fr] pl-0.5 leading-[14px]">
        <dt>Fill:</dt><dd>N/A</dd>
        <dt>Stroke:</dt><dd>N/A</dd>
      </dl>
      <span className="w-3.5">O:</span>
      <Spin label="Opacity" value="100" width="w-[27px]" />
      <div className="ml-[3px] h-full w-0.5 border-r border-white bg-[#b5b5b5]" />
      <button aria-label="Toggle layer visibility" className="ml-[3px]"><Svg>{pic.eye}</Svg></button>
      <button aria-label="Lock layer" className="ml-1.5"><Svg>{pic.lock}</Svg></button>
      <Combo label="Current layer" value="•Layer 1" className="ml-[3px] h-[26px] w-[68px] text-[10px] font-bold" arrowWidth="w-[17px]" />
      <p className="ml-1.5 min-w-0 grow truncate">Edit objects' colors, gradients, stroke width, arrowheads, dash patterns...</p>
      <div className="h-full w-0.5 shrink-0 border-r border-white bg-[#b5b5b5]" />
      <div className="grid w-[64px] shrink-0 grid-cols-[12px_1fr] pl-0.5 leading-[14px]">
        <span>X:</span><span className="text-right font-['Liberation_Mono',monospace]">-372.25</span>
        <span>Y:</span><span className="text-right font-['Liberation_Mono',monospace]">1374.45</span>
      </div>
      <span className="w-5 shrink-0 text-center">Z:</span>
      <Spin label="Zoom" value="45%" width="w-[44px]" active />
      <svg width="18" height="12" viewBox="0 0 18 12" className="mt-auto shrink-0" aria-hidden="true">
        <path d="M15 2h2v2h-2zM15 6h2v2h-2zM15 10h2v2h-2zM11 6h2v2h-2zM11 10h2v2h-2zM7 10h2v2H7z" fill="#c4c4c4" />
      </svg>
    </footer>
  );
}

export default function App() {
  return (
    <div className="relative flex min-h-screen flex-col overflow-hidden bg-[#f0f0f0] font-['Noto_Sans','Open_Sans',sans-serif] text-[11px] leading-4 text-black">
      <Gradients />
      <TitleBar />
      <MenuBar />
      <ControlBar />
      <main className="flex grow">
        <Toolbox />
        <Workspace />
        <Dock />
        <Strip label="Commands" names={commands} className="w-[31px]" />
        <Strip label="Snapping" names={snaps} pressed={["snap", "snapnode", "grid", "guides"]} className="w-[28px]" />
      </main>
      <Palette />
      <StatusBar />
      <svg width="188" height="64" viewBox="0 0 188 64" className="pointer-events-none absolute top-[27px] left-[413px] z-30" aria-hidden="true">
        <path d="M0 32L64 0h37L50 25h136v13H50l51 25H64z" fill="#0489d0" />
      </svg>
    </div>
  );
}
